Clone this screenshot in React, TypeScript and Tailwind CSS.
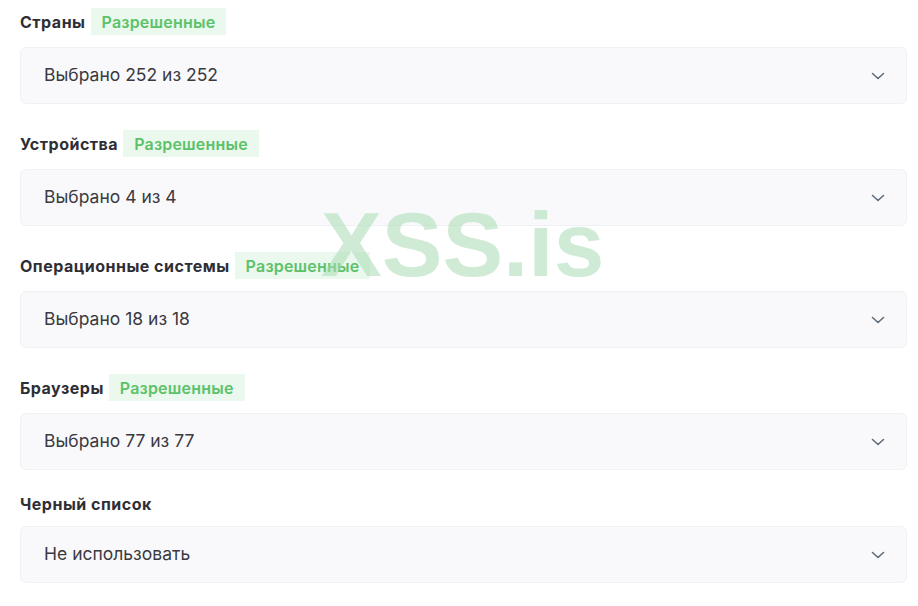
import React from "react";

const sections = [
  { label: "Страны", badge: true, value: "Выбрано 252 из 252" },
  { label: "Устройства", badge: true, value: "Выбрано 4 из 4" },
  { label: "Операционные системы", badge: true, value: "Выбрано 18 из 18" },
  { label: "Браузеры", badge: true, value: "Выбрано 77 из 77" },
  { label: "Черный список", badge: false, value: "Не использовать" },
];

function Chevron() {
  return (
    <svg width="16" height="16" viewBox="0 0 16 16" fill="none">
      <path d="M2.5 5.5 L8 10.5 L13.5 5.5" stroke="#5f6b7a" strokeWidth="1.6" strokeLinecap="round" strokeLinejoin="round" />
    </svg>
  );
}

export default function App() {
  return (
    <div
      className="relative w-[918px] h-[606px] bg-white overflow-hidden"
      style={{ fontFamily: "Inter, 'Open Sans', sans-serif" }}
    >
      <div className="ml-[20px] w-[887px] pt-[8px] flex flex-col gap-[26px]">
        {sections.map((s) => (
          <div key={s.label} className="flex flex-col gap-[12px]">
            <div className={"flex items-center gap-[5px] " + (s.badge ? "h-[27px]" : "h-[20px] mt-[-2px]")}>
              <span className="text-[16px] font-bold text-[#2e2e35] tracking-[0.5px]">{s.label}</span>
              {s.badge && (
                <span className="h-[27px] px-[11px] flex items-center bg-[#ebf8ed] text-[#5cc26a] text-[16px] font-semibold tracking-[0.2px]">
                  Разрешенные
                </span>
              )}
            </div>
            <div className="h-[57px] rounded-[6px] border border-[#f0f1f4] bg-[#f9f9fc] flex items-center justify-between pl-[23px] pr-[20px]">
              <span className="text-[17.5px] text-[#3a3a40]">{s.value}</span>
              <Chevron />
            </div>
          </div>
        ))}
      </div>
      <div
        className="absolute left-[321px] top-[199px] text-[91px] font-bold leading-none text-[#a8dcb3] opacity-55 pointer-events-none"
        style={{ fontFamily: "'Liberation Sans', Arial, sans-serif" }}
      >
        XSS.is
      </div>
    </div>
  );
}
